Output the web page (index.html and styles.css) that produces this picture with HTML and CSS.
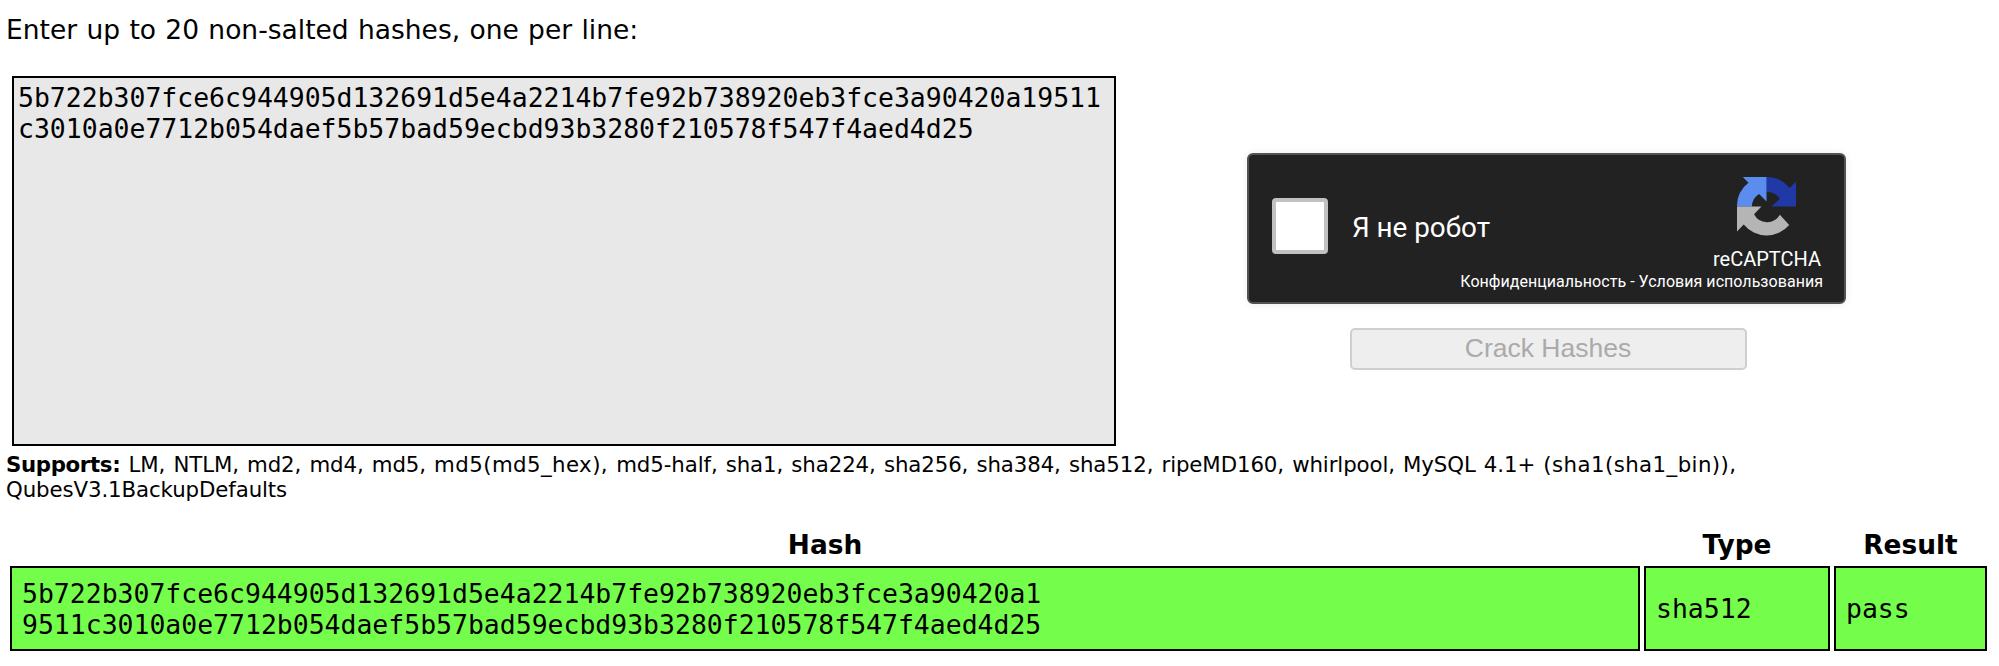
FILE: index.html
```
<!DOCTYPE html>
<html lang="en">
<head>
<meta charset="utf-8">
<title>Hash cracker</title>
<link rel="stylesheet" href="styles.css">
</head>
<body>
<main class="page">
  <p class="intro">Enter up to 20 non-salted hashes, one per line:</p>
  <form class="form">
    <div class="hashes">5b722b307fce6c944905d132691d5e4a2214b7fe92b738920eb3fce3a90420a19511c3010a0e7712b054daef5b57bad59ecbd93b3280f210578f547f4aed4d25</div>
    <div class="side">
      <div class="captcha">
        <span class="check"></span>
        <span class="robot">Я не робот</span>
        <div class="brand">
          <svg class="logo" viewBox="0 0 64 64">
            <path fill="#2139a6" d="M32 0A32 32 0 0 1 57 12L64 5V32H37.5L46.5 23.6A16 16 0 0 0 32 16.2Z"/>
            <path fill="#5b8def" d="M32 0H6.3L12.4 6.2A32 32 0 0 0 0 32H16.2A16 16 0 0 1 24 18.5L32 26.5Z"/>
            <path fill="#b5b5b5" d="M0 32H26.5L18.5 40.4A16 16 0 0 0 46.5 41L56.6 52A32 32 0 0 1 7.3 51.5L0 59Z"/>
          </svg>
          <span class="name">reCAPTCHA</span>
        </div>
        <div class="terms"><span>Конфиденциальность</span> - <span>Условия использования</span></div>
      </div>
      <button class="crack" type="button" disabled>Crack Hashes</button>
    </div>
  </form>
  <p class="supports"><b>Supports:</b> LM, NTLM, md2, md4, md5, <span class="wide">md5(md5_hex),</span> md5-half, sha1, sha224, sha256, sha384, sha512, ripeMD160, whirlpool, MySQL 4.1+ <span class="wide">(sha1(sha1_bin)),</span><br>QubesV3.1BackupDefaults</p>
  <section class="results">
    <div class="head">Hash</div>
    <div class="head">Type</div>
    <div class="head">Result</div>
    <div class="cell">5b722b307fce6c944905d132691d5e4a2214b7fe92b738920eb3fce3a90420a1<br>9511c3010a0e7712b054daef5b57bad59ecbd93b3280f210578f547f4aed4d25</div>
    <div class="cell">sha512</div>
    <div class="cell">pass</div>
  </section>
</main>
</body>
</html>
```
FILE: styles.css
```
* { box-sizing: border-box; }
body {
  margin: 0;
  background: #fff;
  color: #000;
  font-family: "DejaVu Sans", sans-serif;
}
.page { height: 666px; padding: 14px 12px 0 6px; overflow: hidden; }
.intro { margin: 0 0 30px; font-size: 26.5px; line-height: 32px; word-spacing: .9px; }
.form { display: flex; margin: 0; padding-left: 6px; }
.hashes {
  width: 1104px;
  height: 370px;
  padding: 4px;
  border: 2px solid #000;
  background: #e8e8e8;
  font: 26.46px/31px "DejaVu Sans Mono", monospace;
  word-break: break-all;
}
.side {
  display: flex;
  flex-direction: column;
  align-items: center;
  gap: 24px;
  margin-left: 131px;
  padding-top: 77px;
}
.captcha {
  display: grid;
  grid-template-columns: 56px 1fr auto;
  grid-template-rows: 117px auto;
  width: 599px;
  height: 151px;
  padding: 0 21px 0 23px;
  border: 2px solid #525252;
  border-radius: 6px;
  background: #222;
  box-shadow: 0 0 8px rgba(0, 0, 0, .08);
  color: #fff;
  font-family: Roboto, sans-serif;
}
.check {
  width: 56px;
  height: 56px;
  margin-top: 43px;
  border: 4px solid #c1c1c1;
  border-radius: 4px;
  background: #fff;
}
.robot { margin: 56px 0 0 24px; font-size: 27.8px; line-height: 34px; }
.brand { display: flex; flex-direction: column; align-items: center; padding: 22px 2px 0 0; }
.logo { width: 59px; height: 59px; }
.name { margin-top: 11px; font-size: 20px; line-height: 24px; }
.terms {
  grid-column: 1 / -1;
  justify-self: end;
  font-size: 16px;
  line-height: 20px;
  letter-spacing: .04px;
  white-space: pre;
}
.crack {
  width: 397px;
  height: 42px;
  margin-left: 3px;
  padding: 0 0 2px;
  border: 2px solid #cfcfcf;
  border-radius: 5px;
  background: #eee;
  color: #aaa;
  font: 26.5px/36px "Liberation Sans", Arial, sans-serif;
}
.supports {
  margin: 6px 0 0;
  font-size: 21.3px;
  line-height: 25px;
  letter-spacing: -.1px;
  word-spacing: 1.5px;
  white-space: nowrap;
}
.supports b { letter-spacing: -.35px; }
.wide { letter-spacing: .42px; }
.results {
  display: grid;
  grid-template-columns: 1630px 186px 153px;
  grid-template-rows: 39px 85px;
  column-gap: 4px;
  margin: 25px 0 0 4px;
}
.head { font-size: 26.4px; font-weight: bold; line-height: 36px; text-align: center; }
.cell {
  display: flex;
  align-items: center;
  padding: 0 10px;
  border: 2px solid #000;
  background: #75fd4c;
  font: 26.46px/31px "DejaVu Sans Mono", monospace;
}
```
